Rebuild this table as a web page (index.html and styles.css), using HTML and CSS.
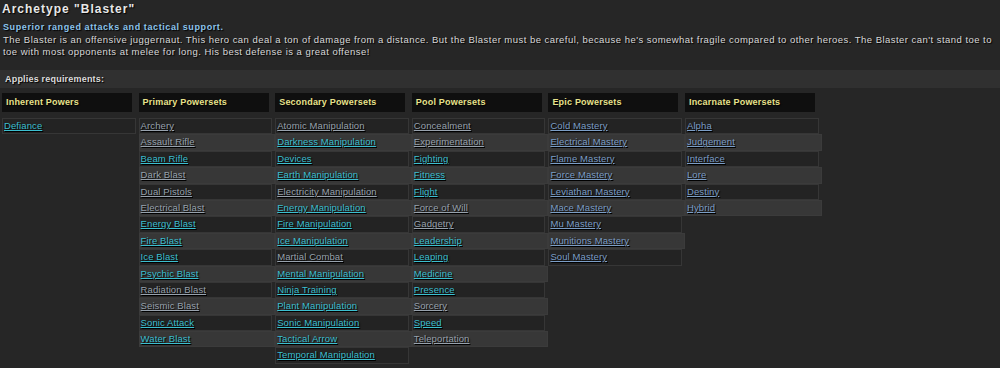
FILE: index.html
```html
<!DOCTYPE html>
<html lang="en">
<head>
    <meta charset="UTF-8">
    <title>Archetype "Blaster"</title>
    <link rel="stylesheet" href="styles.css">
</head>
<body>
    <h1 class="title">Archetype "Blaster"</h1>
    <div class="desc">
        <b class="tagline">Superior ranged attacks and tactical support.</b><br>
        The Blaster is an offensive juggernaut. This hero can deal a ton of damage from a distance. But the Blaster must be careful, because he's somewhat fragile compared to other heroes. The Blaster can't stand toe to toe with most opponents at melee for long. His best defense is a great offense!
    </div>

    <div class="req-bar">Applies requirements:</div>

    <div class="sets">
        <div class="set">
            <div class="set-head">Inherent Powers</div>
            <div class="row"><a href="#" class="on">Defiance</a></div>
        </div>

        <div class="set">
            <div class="set-head">Primary Powersets</div>
            <div class="row"><a href="#" class="off">Archery</a></div>
            <div class="row"><a href="#" class="off">Assault Rifle</a></div>
            <div class="row"><a href="#" class="on">Beam Rifle</a></div>
            <div class="row"><a href="#" class="off">Dark Blast</a></div>
            <div class="row"><a href="#" class="off">Dual Pistols</a></div>
            <div class="row"><a href="#" class="off">Electrical Blast</a></div>
            <div class="row"><a href="#" class="on">Energy Blast</a></div>
            <div class="row"><a href="#" class="on">Fire Blast</a></div>
            <div class="row"><a href="#" class="on">Ice Blast</a></div>
            <div class="row"><a href="#" class="on">Psychic Blast</a></div>
            <div class="row"><a href="#" class="off">Radiation Blast</a></div>
            <div class="row"><a href="#" class="off">Seismic Blast</a></div>
            <div class="row"><a href="#" class="on">Sonic Attack</a></div>
            <div class="row"><a href="#" class="on">Water Blast</a></div>
        </div>

        <div class="set">
            <div class="set-head">Secondary Powersets</div>
            <div class="row"><a href="#" class="off">Atomic Manipulation</a></div>
            <div class="row"><a href="#" class="on">Darkness Manipulation</a></div>
            <div class="row"><a href="#" class="on">Devices</a></div>
            <div class="row"><a href="#" class="on">Earth Manipulation</a></div>
            <div class="row"><a href="#" class="off">Electricity Manipulation</a></div>
            <div class="row"><a href="#" class="on">Energy Manipulation</a></div>
            <div class="row"><a href="#" class="on">Fire Manipulation</a></div>
            <div class="row"><a href="#" class="on">Ice Manipulation</a></div>
            <div class="row"><a href="#" class="off">Martial Combat</a></div>
            <div class="row"><a href="#" class="on">Mental Manipulation</a></div>
            <div class="row"><a href="#" class="on">Ninja Training</a></div>
            <div class="row"><a href="#" class="on">Plant Manipulation</a></div>
            <div class="row"><a href="#" class="on">Sonic Manipulation</a></div>
            <div class="row"><a href="#" class="on">Tactical Arrow</a></div>
            <div class="row"><a href="#" class="on">Temporal Manipulation</a></div>
        </div>

        <div class="set">
            <div class="set-head">Pool Powersets</div>
            <div class="row"><a href="#" class="off">Concealment</a></div>
            <div class="row"><a href="#" class="off">Experimentation</a></div>
            <div class="row"><a href="#" class="on">Fighting</a></div>
            <div class="row"><a href="#" class="on">Fitness</a></div>
            <div class="row"><a href="#" class="on">Flight</a></div>
            <div class="row"><a href="#" class="off">Force of Will</a></div>
            <div class="row"><a href="#" class="off">Gadgetry</a></div>
            <div class="row"><a href="#" class="on">Leadership</a></div>
            <div class="row"><a href="#" class="on">Leaping</a></div>
            <div class="row"><a href="#" class="on">Medicine</a></div>
            <div class="row"><a href="#" class="on">Presence</a></div>
            <div class="row"><a href="#" class="off">Sorcery</a></div>
            <div class="row"><a href="#" class="on">Speed</a></div>
            <div class="row"><a href="#" class="off">Teleportation</a></div>
        </div>

        <div class="set">
            <div class="set-head">Epic Powersets</div>
            <div class="row"><a href="#" class="epic">Cold Mastery</a></div>
            <div class="row"><a href="#" class="epic">Electrical Mastery</a></div>
            <div class="row"><a href="#" class="epic">Flame Mastery</a></div>
            <div class="row"><a href="#" class="epic">Force Mastery</a></div>
            <div class="row"><a href="#" class="epic">Leviathan Mastery</a></div>
            <div class="row"><a href="#" class="epic">Mace Mastery</a></div>
            <div class="row"><a href="#" class="epic">Mu Mastery</a></div>
            <div class="row"><a href="#" class="epic">Munitions Mastery</a></div>
            <div class="row"><a href="#" class="epic">Soul Mastery</a></div>
        </div>

        <div class="set">
            <div class="set-head">Incarnate Powersets</div>
            <div class="row"><a href="#" class="epic">Alpha</a></div>
            <div class="row"><a href="#" class="epic">Judgement</a></div>
            <div class="row"><a href="#" class="epic">Interface</a></div>
            <div class="row"><a href="#" class="epic">Lore</a></div>
            <div class="row"><a href="#" class="epic">Destiny</a></div>
            <div class="row"><a href="#" class="epic">Hybrid</a></div>
        </div>
    </div>
</body>
</html>
```

FILE: styles.css
```css
body {
    margin: 0;
    background: #262626;
    color: #d8d8d8;
    font-family: "Liberation Sans", Arial, sans-serif;
    font-size: 9.5px;
    text-shadow: 1px 1px 1px #000;
}
.title {
    margin: 0;
    padding-left: 2px;
    height: 18px;
    line-height: 18px;
    font-size: 12px;
    letter-spacing: 1px;
    color: #e8e8e8;
}
.desc {
    padding: 3px 3px 0;
    line-height: 12.5px;
    letter-spacing: 0.46px;
}
.tagline {
    font-size: 9px;
    color: #8cc4ec;
    letter-spacing: 0.6px;
}
.req-bar {
    margin-top: 11.5px;
    height: 18px;
    line-height: 18px;
    padding-left: 5px;
    background: #303030;
    font-size: 9px;
    font-weight: bold;
    letter-spacing: 0.2px;
    color: #dcdcdc;
}
.sets {
    display: flex;
    align-items: flex-start;
    gap: 3px;
    padding: 5px 2px 0;
}
.set {
    width: 133.6px;
}
.set-head {
    width: 126px;
    height: 19px;
    line-height: 19px;
    padding-left: 4px;
    margin-bottom: 6px;
    background: #0f0f0f;
    color: #e8e28c;
    font-size: 9px;
    font-weight: bold;
    letter-spacing: 0.2px;
}
.row {
    box-sizing: border-box;
    height: 16.4px;
    line-height: 14px;
    padding-left: 1px;
    background: #232323;
    border: 1px solid #363636;
    letter-spacing: 0.1px;
}
.row:nth-of-type(odd) {
    background: #373737;
    border-color: #3b3b3b;
    margin-right: -3px;
}
.row a {
    text-decoration: underline;
}
.on {
    color: #3cbfcf;
}
.off {
    color: #98a2ad;
}
.epic {
    color: #7c9ec6;
}
```
